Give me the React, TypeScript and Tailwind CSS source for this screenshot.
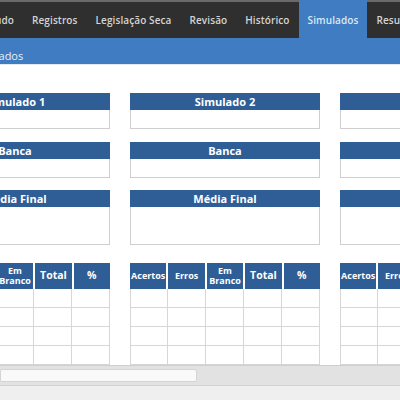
import React from "react";

const tabs = ["Conteúdo", "Registros", "Legislação Seca", "Revisão", "Histórico", "Simulados", "Resultados"];
const cols = ["Acertos", "Erros", "Em Branco", "Total", "%"];
const sims = ["Simulado 1", "Simulado 2", "Simulado 3"];

function Card({ title, h }: { title: string; h: string }) {
  return (
    <div className="w-[190px] shrink-0">
      <div className="h-[17px] bg-[#2f5e97] text-white text-[11px] font-bold leading-[17px] text-center">{title}</div>
      <div className={`${h} border border-t-0 border-[#cfcfcf] bg-white`} />
    </div>
  );
}

function Table() {
  return (
    <div className="w-[190px] shrink-0">
      <div className="grid grid-cols-5 gap-x-[2px] h-[26px]">
        {cols.map((c) => (
          <div key={c} className="bg-[#2f5e97] text-white font-bold flex items-center justify-center text-center">
            {c === "Em Branco" ? (
              <span className="text-[9px] leading-[10px]">Em<br />Branco</span>
            ) : (
              <span className={c === "Erros" || c === "Acertos" ? "text-[9px]" : "text-[10.5px]"}>{c}</span>
            )}
          </div>
        ))}
      </div>
      {[0, 1, 2, 3].map((r) => (
        <div key={r} className="grid grid-cols-5 h-[19px]">
          {cols.map((c, i) => (
            <div key={c} className={`border-b border-r border-[#d6d6d6] ${i === 0 ? "border-l" : ""}`} />
          ))}
        </div>
      ))}
    </div>
  );
}

export default function App() {
  return (
    <div className="w-[400px] h-[400px] overflow-hidden bg-white flex flex-col" style={{ fontFamily: '"Open Sans", "Noto Sans", sans-serif' }}>
      <div className="h-[2px] bg-[#6a6a6a] shrink-0" />
      <div className="h-[36px] bg-[#2f2f2f] flex shrink-0 whitespace-nowrap">
        <div className="flex ml-[-43px]">
          {tabs.map((t) => (
            <div
              key={t}
              className={`px-[9px] flex items-center text-[10px] font-semibold tracking-[0.1px] ${t === "Simulados" ? "bg-[#3f7cc2] text-[#dce9f7] mt-[-2px] pt-[2px]" : "text-[#d4d4d4]"}`}
            >
              {t}
            </div>
          ))}
        </div>
      </div>
      <div className="h-[26px] bg-[#3f7cc2] shrink-0 flex items-end pb-0 whitespace-nowrap">
        <span className="ml-[-30px] text-[11px] text-[#e8f0fa]">Simulados</span>
      </div>
      <div className="h-[1px] bg-[#e4e9f0] shrink-0" />
      <div className="flex flex-col ml-[-80px] mt-[28px]">
        <div className="flex gap-[20px]">
          {sims.map((s) => (
            <Card key={s} title={s} h="h-[19px]" />
          ))}
        </div>
        <div className="flex gap-[20px] mt-[13px]">
          {sims.map((s) => (
            <Card key={s} title="Banca" h="h-[19px]" />
          ))}
        </div>
        <div className="flex gap-[20px] mt-[12px]">
          {sims.map((s) => (
            <Card key={s} title="Média Final" h="h-[38px]" />
          ))}
        </div>
        <div className="flex gap-[20px] mt-[18px]">
          {sims.map((s) => (
            <Table key={s} />
          ))}
        </div>
      </div>
      <div className="h-[1px] bg-[#cfcfcf] shrink-0" />
      <div className="h-[19px] bg-[#e2e2e2] shrink-0 flex items-center">
        <div className="w-[197px] h-[13px] bg-[#f9f9f9] border border-[#d4d4d4] rounded-[2px]" />
      </div>
      <div className="h-[1px] bg-[#d2d2d2] shrink-0" />
      <div className="flex-1 bg-[#efefef]" />
    </div>
  );
}
